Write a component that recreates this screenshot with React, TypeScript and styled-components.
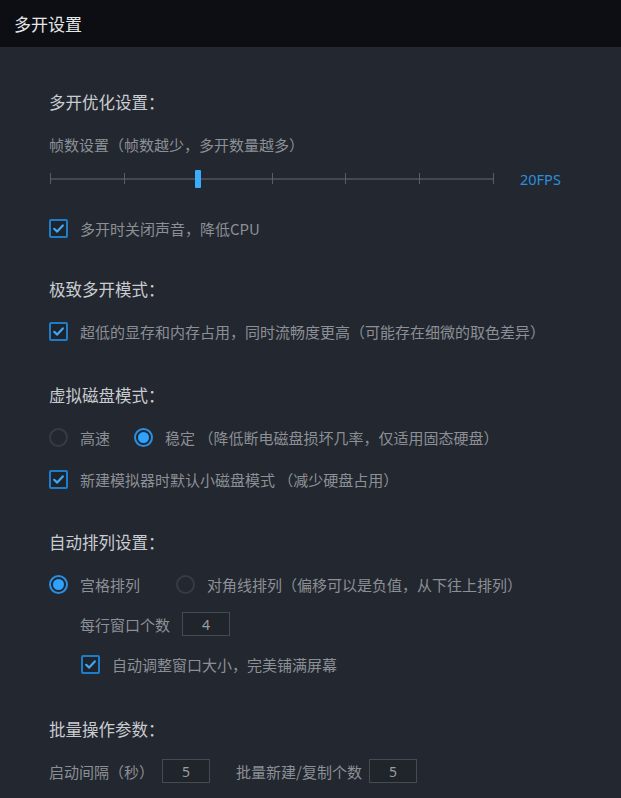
import React from 'react';
import styled, { createGlobalStyle } from 'styled-components';

const GlobalStyle = createGlobalStyle`
  html, body {
    margin: 0;
    padding: 0;
    background: #23272f;
  }
  body {
    font-family: "Noto Sans CJK SC", "Noto Sans", sans-serif;
  }
`;

const Page = styled.div`
  width: 621px;
  min-height: 798px;
  background: #23272f;
  display: flex;
  flex-direction: column;
`;

const Header = styled.header`
  height: 47px;
  background: #0c0e13;
  display: flex;
  align-items: center;
  padding-left: 14px;
  color: #e6e7e9;
  font-size: 17px;
`;

const Body = styled.main`
  padding: 34px 0 0 49px;
  display: flex;
  flex-direction: column;
`;

const Section = styled.section`
  display: flex;
  flex-direction: column;
  margin-bottom: ${(p: { $after?: number }) => p.$after ?? 21}px;
`;

const Title = styled.h2`
  margin: 0;
  height: 42px;
  display: flex;
  align-items: center;
  font-size: 16.5px;
  font-weight: normal;
  color: #c9ccd1;
`;

const Row = styled.div<{ $h?: number; $indent?: number; $top?: number }>`
  height: ${(p) => p.$h ?? 42}px;
  margin-top: ${(p) => p.$top ?? 0}px;
  padding-left: ${(p) => p.$indent ?? 0}px;
  display: flex;
  align-items: center;
  font-size: 15px;
  color: #8c9096;
  white-space: nowrap;
`;

const Label = styled.span<{ $gap?: number }>`
  margin-right: ${(p) => p.$gap ?? 0}px;
`;

/* slider */
const SliderWrap = styled.div`
  position: relative;
  width: 444px;
  height: 28px;
  margin-left: 1px;
`;

const Track = styled.div`
  position: absolute;
  left: 0;
  right: 0;
  top: 13px;
  height: 2px;
  background: #45484e;
`;

const Tick = styled.div`
  position: absolute;
  top: 8px;
  width: 1px;
  height: 11px;
  background: #595c62;
`;

const Thumb = styled.div`
  position: absolute;
  top: 5px;
  width: 6px;
  height: 18px;
  background: #3aaefc;
  border-radius: 1px;
`;

const Fps = styled.span`
  margin-left: 26px;
  color: #2a90de;
  font-family: "Noto Sans", "Open Sans", sans-serif;
  font-size: 14.5px;
`;

const Slider: React.FC<{ steps: number; value: number }> = ({ steps, value }) => {
  const step = 443 / (steps - 1);
  return (
    <SliderWrap>
      <Track />
      {Array.from({ length: steps }).map((_, i) =>
        i === value ? null : <Tick key={i} style={{ left: Math.round(i * step) }} />
      )}
      <Thumb style={{ left: Math.round(value * step) - 3 }} />
    </SliderWrap>
  );
};

/* checkbox */
const Box = styled.span`
  width: 19px;
  height: 19px;
  box-sizing: border-box;
  border: 2px solid #1c7ecb;
  border-radius: 2px;
  background: #1f232a;
  display: inline-flex;
  align-items: center;
  justify-content: center;
  margin-right: 12px;
  flex-shrink: 0;
`;

const Check: React.FC = () => (
  <Box>
    <svg width="13" height="13" viewBox="0 0 13 13">
      <path d="M2.2 6.8 L5.2 9.6 L10.8 3.4" fill="none" stroke="#3ea9f7" strokeWidth="2.2" strokeLinecap="round" strokeLinejoin="round" />
    </svg>
  </Box>
);

/* radio */
const Circle = styled.span<{ $on?: boolean }>`
  width: 19px;
  height: 19px;
  box-sizing: border-box;
  border-radius: 50%;
  border: 2px solid ${(p) => (p.$on ? '#2a8fe2' : '#373b43')};
  display: inline-flex;
  align-items: center;
  justify-content: center;
  margin-right: 12px;
  flex-shrink: 0;
  &::after {
    content: '';
    width: 11px;
    height: 11px;
    border-radius: 50%;
    background: ${(p) => (p.$on ? '#2ea2ff' : 'transparent')};
  }
`;

const NumBox = styled.span<{ $left?: number; $right?: number }>`
  width: 48px;
  height: 24px;
  box-sizing: border-box;
  border: 1px solid #464a51;
  background: #20242b;
  display: inline-flex;
  align-items: center;
  justify-content: center;
  color: #9a9ea4;
  font-family: "Noto Sans", sans-serif;
  font-size: 14px;
  margin: 0 ${(p) => p.$right ?? 0}px 0 ${(p) => p.$left ?? 13}px;
`;

export default function App() {
  return (
    <Page>
      <GlobalStyle />
      <Header>多开设置</Header>
      <Body>
        <Section $after={19}>
          <Title>多开优化设置：</Title>
          <Row>帧数设置（帧数越少，多开数量越多）</Row>
          <Row $h={28}>
            <Slider steps={7} value={2} />
            <Fps>20FPS</Fps>
          </Row>
          <Row $top={14}>
            <Check />
            多开时关闭声音，降低CPU
          </Row>
        </Section>

        <Section $after={22}>
          <Title>极致多开模式：</Title>
          <Row>
            <Check />
            超低的显存和内存占用，同时流畅度更高（可能存在细微的取色差异）
          </Row>
        </Section>

        <Section>
          <Title>虚拟磁盘模式：</Title>
          <Row>
            <Circle />
            <Label $gap={24}>高速</Label>
            <Circle $on />
            <Label>稳定 （降低断电磁盘损坏几率，仅适用固态硬盘）</Label>
          </Row>
          <Row>
            <Check />
            新建模拟器时默认小磁盘模式 （减少硬盘占用）
          </Row>
        </Section>

        <Section $after={23}>
          <Title>自动排列设置：</Title>
          <Row>
            <Circle $on />
            <Label $gap={36}>宫格排列</Label>
            <Circle />
            <Label>对角线排列（偏移可以是负值，从下往上排列）</Label>
          </Row>
          <Row $h={38} $indent={31}>
            每行窗口个数
            <NumBox $left={12}>4</NumBox>
          </Row>
          <Row $indent={32}>
            <Check />
            自动调整窗口大小，完美铺满屏幕
          </Row>
        </Section>

        <Section>
          <Title>批量操作参数：</Title>
          <Row>
            启动间隔（秒）
            <NumBox $left={8} $right={26}>5</NumBox>
            批量新建/复制个数
            <NumBox $left={7}>5</NumBox>
          </Row>
        </Section>
      </Body>
    </Page>
  );
}
